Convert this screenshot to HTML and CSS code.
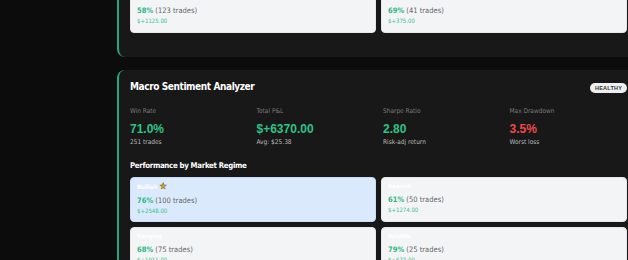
FILE: index.html
```html
<!DOCTYPE html>
<html>
<head>
<meta charset="utf-8">
<link rel="stylesheet" href="styles.css">
</head>
<body>
<div class="page">
  <section class="card">
    <div class="card-head">
      <h2 class="title">Trend Momentum Scanner</h2>
      <span class="badge">HEALTHY</span>
    </div>
    <div class="stats">
      <div class="stat"><div class="label">Win Rate</div><div class="value green">63.0%</div><div class="sub">164 trades</div></div>
      <div class="stat"><div class="label">Total P&amp;L</div><div class="value green">$+2890.00</div><div class="sub">Avg: $17.62</div></div>
      <div class="stat"><div class="label">Sharpe Ratio</div><div class="value green">1.95</div><div class="sub">Risk-adj return</div></div>
      <div class="stat"><div class="label">Max Drawdown</div><div class="value red">5.1%</div><div class="sub">Worst loss</div></div>
    </div>
    <h3 class="section">Performance by Market Regime</h3>
    <div class="regimes">
      <div class="regime"><div class="rname">Bullish</div><div class="rline"><span class="pct">64%</span> <span class="trades">(88 trades)</span></div><div class="amt">$+1390.00</div></div>
      <div class="regime"><div class="rname">Bearish</div><div class="rline"><span class="pct">55%</span> <span class="trades">(60 trades)</span></div><div class="amt">$+410.00</div></div>
      <div class="regime"><div class="rname">Ranging</div><div class="rline"><span class="pct">58%</span> <span class="trades">(123 trades)</span></div><div class="amt">$+1125.00</div></div>
      <div class="regime"><div class="rname">Volatile</div><div class="rline"><span class="pct">69%</span> <span class="trades">(41 trades)</span></div><div class="amt">$+375.00</div></div>
    </div>
  </section>

  <section class="card">
    <div class="card-head">
      <h2 class="title">Macro Sentiment Analyzer</h2>
      <span class="badge">HEALTHY</span>
    </div>
    <div class="stats">
      <div class="stat"><div class="label">Win Rate</div><div class="value green">71.0%</div><div class="sub">251 trades</div></div>
      <div class="stat"><div class="label">Total P&amp;L</div><div class="value green">$+6370.00</div><div class="sub">Avg: $25.38</div></div>
      <div class="stat"><div class="label">Sharpe Ratio</div><div class="value green">2.80</div><div class="sub">Risk-adj return</div></div>
      <div class="stat"><div class="label">Max Drawdown</div><div class="value red">3.5%</div><div class="sub">Worst loss</div></div>
    </div>
    <h3 class="section">Performance by Market Regime</h3>
    <div class="regimes">
      <div class="regime best"><div class="rname">Bullish <span class="star">★</span></div><div class="rline"><span class="pct">76%</span> <span class="trades">(100 trades)</span></div><div class="amt">$+2548.00</div></div>
      <div class="regime"><div class="rname">Bearish</div><div class="rline"><span class="pct">61%</span> <span class="trades">(50 trades)</span></div><div class="amt">$+1274.00</div></div>
      <div class="regime"><div class="rname">Ranging</div><div class="rline"><span class="pct">68%</span> <span class="trades">(75 trades)</span></div><div class="amt">$+1911.00</div></div>
      <div class="regime"><div class="rname">Volatile</div><div class="rline"><span class="pct">79%</span> <span class="trades">(25 trades)</span></div><div class="amt">$+637.00</div></div>
    </div>
  </section>
</div>
</body>
</html>
```

FILE: styles.css
```css
html, body {
  margin: 0;
  padding: 0;
  background: #0c0c0c;
  overflow: hidden;
  width: 628px;
  height: 260px;
}
body {
  font-family: "DejaVu Sans Condensed", "DejaVu Sans", sans-serif;
  font-stretch: condensed;
  color: #fff;
}
.page {
  margin-top: -169px;
  padding-left: 117px;
  display: flex;
  flex-direction: column;
  gap: 13px;
  width: 523px;
}
.card {
  background: #181818;
  border-left: 2px solid #22a77b;
  border-radius: 8px;
  padding: 10px 13px 24px 11px;
  height: 226px;
  box-sizing: border-box;
  width: 523px;
}
.card-head {
  display: flex;
  justify-content: space-between;
  align-items: center;
  height: 14px;
}
.title {
  margin: 0;
  font-size: 10px;
  line-height: 14px;
  font-weight: 700;
  letter-spacing: -0.4px;
  color: #fff;
}
.badge {
  background: #efefef;
  color: #333;
  font-family: "Liberation Sans", sans-serif;
  font-size: 5.5px;
  font-weight: 700;
  line-height: 10px;
  height: 10px;
  padding: 0 5px;
  border-radius: 5px;
  letter-spacing: 0.2px;
  margin-top: 2px;
}
.stats {
  display: grid;
  grid-template-columns: repeat(4, 1fr);
  column-gap: 9px;
  margin-top: 13px;
}
.label {
  font-size: 6.5px;
  line-height: 9px;
  color: #7a7a7a;
}
.value {
  font-family: "Liberation Sans", sans-serif;
  font-size: 12px;
  font-weight: 700;
  line-height: 16px;
  margin-top: 5px;
}
.green { color: #2ec386; }
.red { color: #f04848; }
.sub {
  font-size: 6.5px;
  line-height: 9px;
  color: #b8b8b8;
  margin-top: 1px;
}
.section {
  margin: 13px 0 0;
  font-size: 7.8px;
  line-height: 11px;
  font-weight: 700;
  letter-spacing: -0.3px;
  color: #fff;
}
.regimes {
  display: grid;
  grid-template-columns: 1fr 1fr;
  gap: 5px;
  margin-top: 6px;
}
.regime {
  background: #f3f4f6;
  border: 1px solid #e6e7ea;
  border-radius: 4px;
  padding: 3px 6px 7px;
  height: 45px;
  box-sizing: border-box;
}
.regime.best {
  background: #dbe9fd;
  border-color: #c9dcfa;
}
.rname {
  font-size: 6px;
  line-height: 10px;
  font-weight: 700;
  color: #fff;
}
.star {
  color: #d9ac22;
  font-size: 9px;
  font-family: "DejaVu Sans", sans-serif;
  -webkit-text-stroke: 0.4px #6b5410;
}
.rline {
  margin-top: 3px;
  font-size: 7.5px;
  line-height: 11px;
}
.pct {
  color: #2fb785;
  font-weight: 700;
}
.trades {
  color: #666;
}
.amt {
  font-size: 6px;
  line-height: 9px;
  color: #3cbf8e;
}
```
